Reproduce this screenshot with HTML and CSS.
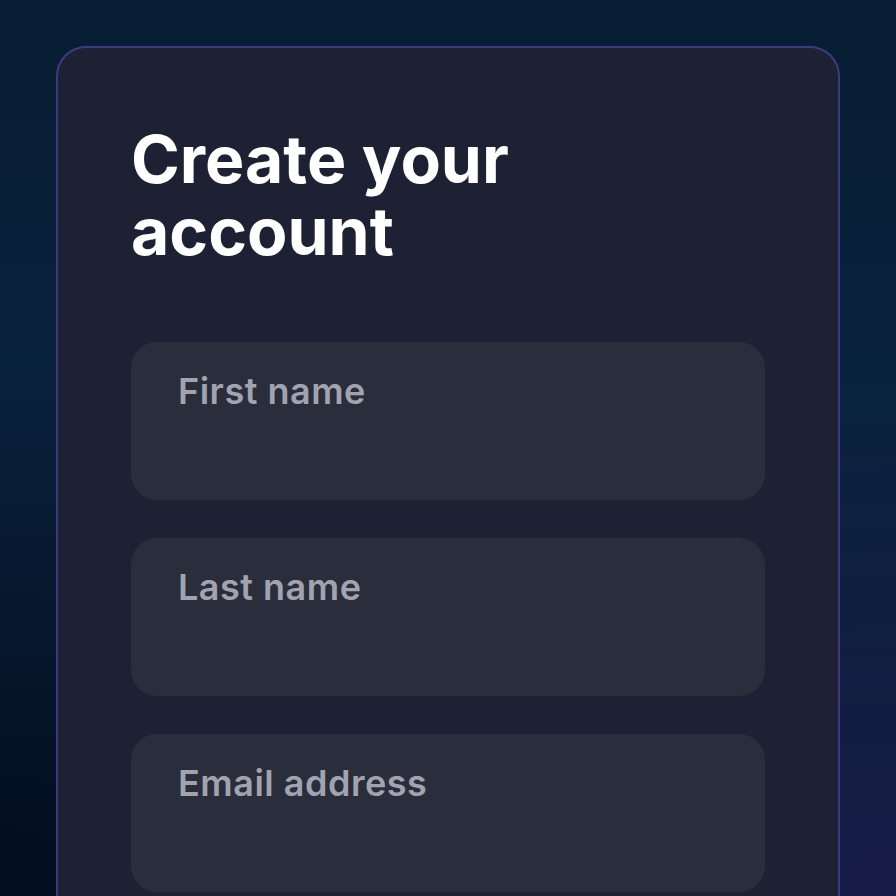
FILE: index.html
```html
<!DOCTYPE html>
<html lang="en">
<head>
    <meta charset="UTF-8">
    <meta name="viewport" content="width=device-width, initial-scale=1.0">
    <title>Create your account</title>
    <link rel="stylesheet" href="styles.css">
</head>
<body>
    <div class="card">
        <h1>Create your account</h1>

        <form class="signup-form">
            <label class="field">
                <span class="field-label">First name</span>
                <input type="text" name="first-name">
            </label>
            <label class="field">
                <span class="field-label">Last name</span>
                <input type="text" name="last-name">
            </label>
            <label class="field">
                <span class="field-label">Email address</span>
                <input type="email" name="email">
            </label>
        </form>
    </div>
</body>
</html>
```

FILE: styles.css
```css
html, body { height: 100%; }
body { margin: 0; font-family: Inter, "Noto Sans", sans-serif; background: radial-gradient(ellipse 70% 60% at 0% 100%, #020d1d 0%, rgba(2,13,29,0) 100%), radial-gradient(ellipse 70% 55% at 100% 100%, #161b46 0%, rgba(22,27,70,0) 100%), linear-gradient(to bottom, #071d33 0%, #09223d 45%, #0c1e3b 100%); background-color: #06142a; overflow: hidden; }
.card { margin: 46px 56px 0; background-color: #1e2133; border: 2px solid #3c3a82; border-bottom: none; border-radius: 30px 30px 0 0; padding: 75px 73px 40px; min-height: 900px; box-sizing: border-box; }
h1 { margin: 0; color: #fff; font-size: 66px; line-height: 72px; font-weight: 700; letter-spacing: 0; width: 440px; }
.signup-form { display: flex; flex-direction: column; gap: 38px; margin-top: 75px; }
.field { display: flex; flex-direction: column; height: 158px; box-sizing: border-box; padding: 30px 47px 0; background-color: #292d3c; border-radius: 26px; cursor: text; }
.field-label { color: #a1a4ae; font-size: 36px; line-height: 38px; font-weight: 600; letter-spacing: 0.5px; }
.field input { background: transparent; border: none; outline: none; color: #fff; font: inherit; font-size: 28px; padding: 10px 0 0; }
```
